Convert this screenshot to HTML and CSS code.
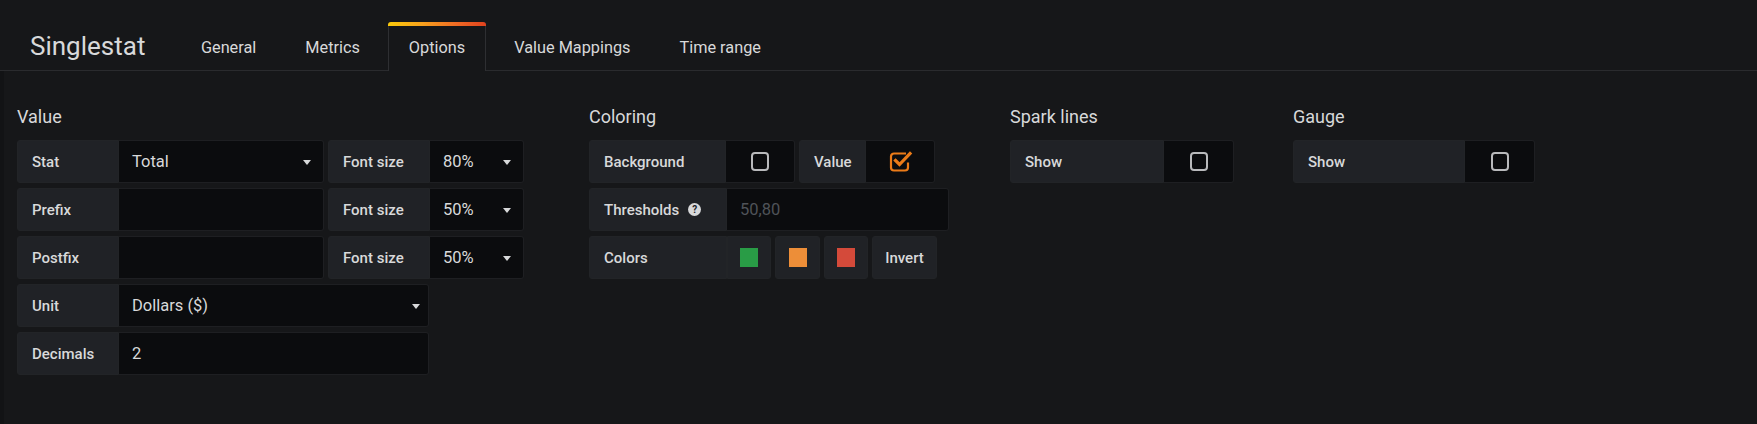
FILE: index.html
```html
<!DOCTYPE html>
<html lang="en">
<head>
<meta charset="utf-8">
<title>Singlestat options</title>
<link rel="stylesheet" href="styles.css">
</head>
<body>
<header class="header">
  <div class="title">Singlestat</div>
  <nav class="tabs">
    <div class="tab">General</div>
    <div class="tab">Metrics</div>
    <div class="tab active">Options</div>
    <div class="tab">Value Mappings</div>
    <div class="tab">Time range</div>
  </nav>
</header>
<main class="content">
  <section class="group group-value">
    <h2 class="group-title">Value</h2>
    <div class="row">
      <div class="label w-102">Stat</div>
      <div class="input select w-205"><span>Total</span><i class="caret"></i></div>
      <div class="label w-102 ml">Font size</div>
      <div class="input select w-94"><span>80%</span><i class="caret"></i></div>
    </div>
    <div class="row">
      <div class="label w-102">Prefix</div>
      <div class="input w-205"></div>
      <div class="label w-102 ml">Font size</div>
      <div class="input select w-94"><span>50%</span><i class="caret"></i></div>
    </div>
    <div class="row">
      <div class="label w-102">Postfix</div>
      <div class="input w-205"></div>
      <div class="label w-102 ml">Font size</div>
      <div class="input select w-94"><span>50%</span><i class="caret"></i></div>
    </div>
    <div class="row">
      <div class="label w-102">Unit</div>
      <div class="input select w-310"><span>Dollars ($)</span><i class="caret caret-unit"></i></div>
    </div>
    <div class="row">
      <div class="label w-102">Decimals</div>
      <div class="input w-310"><span>2</span></div>
    </div>
  </section>

  <section class="group group-coloring">
    <h2 class="group-title">Coloring</h2>
    <div class="row">
      <div class="label w-137">Background</div>
      <div class="input check-cell w-69"><span class="checkbox"></span></div>
      <div class="label w-67 ml">Value</div>
      <div class="input check-cell w-69">
        <svg class="checked" width="26" height="24" viewBox="0 0 26 24">
          <path d="M17 4.5 H5 a3 3 0 0 0 -3 3 v11 a3 3 0 0 0 3 3 h11 a3 3 0 0 0 3 -3 v-5" fill="none" stroke="#eb7b18" stroke-width="2.2"/>
          <path d="M6.5 11.5 L10.5 15.5 L21 4.5" fill="none" stroke="#eb7b18" stroke-width="3.2" stroke-linecap="square"/>
        </svg>
      </div>
    </div>
    <div class="row">
      <div class="label w-138">Thresholds <span class="help">?</span></div>
      <div class="input w-222"><span class="placeholder">50,80</span></div>
    </div>
    <div class="row">
      <div class="label w-138">Colors</div>
      <div class="label swatch-cell w-44 flat"><span class="swatch green"></span></div>
      <div class="label swatch-cell w-45 ml"><span class="swatch orange"></span></div>
      <div class="label swatch-cell w-44 ml"><span class="swatch red"></span></div>
      <div class="label w-65 ml center">Invert</div>
    </div>
  </section>

  <section class="group group-spark">
    <h2 class="group-title">Spark lines</h2>
    <div class="row">
      <div class="label w-154">Show</div>
      <div class="input check-cell w-70"><span class="checkbox"></span></div>
    </div>
  </section>

  <section class="group group-gauge">
    <h2 class="group-title">Gauge</h2>
    <div class="row">
      <div class="label w-172">Show</div>
      <div class="input check-cell w-70"><span class="checkbox"></span></div>
    </div>
  </section>
</main>
</body>
</html>
```

FILE: styles.css
```css
* { box-sizing: border-box; }

html, body {
  margin: 0;
  padding: 0;
  background: #161719;
  color: #d8d9da;
  font-family: Roboto, "Noto Sans", "Liberation Sans", sans-serif;
  height: 100%;
}

.header {
  display: flex;
  align-items: flex-end;
  height: 71px;
  border-bottom: 1px solid #2a2b2e;
  padding-left: 30px;
}

.title {
  font-size: 26px;
  line-height: 48px;
  margin-right: 31px;
  margin-bottom: 0;
}

.tabs {
  display: flex;
  align-items: flex-end;
  margin-bottom: -1px;
}

.tab {
  position: relative;
  font-size: 16.3px;
  line-height: 49px;
  height: 49px;
  padding: 0 20px;
  margin: 0 3.5px;
  border: 1px solid transparent;
  border-bottom: none;
  border-radius: 3px 3px 0 0;
}

.tab.active {
  border-color: #2e2f32;
  background: #161719;
}

.tab.active::before {
  content: "";
  position: absolute;
  left: -1px;
  right: -1px;
  top: -1px;
  height: 4px;
  border-radius: 3px 3px 0 0;
  background: linear-gradient(to right, #fbca0a 0%, #f7a11d 35%, #f06a24 70%, #e0421e 100%);
}

.content {
  display: flex;
  align-items: flex-start;
  padding: 35px 0 0 13px;
  border-left: 4px solid #121315;
  min-height: calc(100% - 71px);
}

.group-value { width: 572px; }
.group-coloring { width: 421px; }
.group-spark { width: 283px; }
.group-gauge { width: 300px; }

.group-title {
  margin: 0 0 12px 0;
  font-size: 18px;
  font-weight: 400;
  line-height: 22px;
}

.row {
  display: flex;
  height: 43px;
  margin-bottom: 5px;
}

.label {
  display: flex;
  align-items: center;
  padding-left: 14px;
  background: #202226;
  border: 1px solid #222427;
  border-radius: 3px 0 0 3px;
  font-size: 15px;
  font-weight: 500;
  white-space: nowrap;
}

.ml { margin-left: 4px; }

.label.flat { border-radius: 0; }

.swatch-cell {
  padding-left: 0;
  justify-content: center;
  border-radius: 3px;
}
.swatch-cell.flat { border-radius: 0 3px 3px 0; }

.label.center {
  justify-content: center;
  padding-left: 0;
  border-radius: 3px;
}

.input {
  display: flex;
  align-items: center;
  padding: 0 12px 0 13px;
  background: #0b0c0e;
  border: 1px solid #1e1f22;
  border-left: none;
  border-radius: 0 3px 3px 0;
  font-size: 16.5px;
}

.select span { flex: 1; }

.caret {
  width: 0;
  height: 0;
  border-left: 4.5px solid transparent;
  border-right: 4.5px solid transparent;
  border-top: 5px solid #d8d9da;
  margin-top: 2px;
}

.caret-unit { margin-right: -4px; }

.placeholder { color: #4f5358; }

.check-cell { justify-content: center; padding: 0; }

.checkbox {
  display: block;
  width: 18px;
  height: 19px;
  border: 2px solid #b9babc;
  border-radius: 4px;
}

.checked { display: block; margin-left: 4px; margin-top: -2px; }

.help {
  display: inline-flex;
  align-items: center;
  justify-content: center;
  width: 13px;
  height: 13px;
  margin-left: 9px;
  border-radius: 50%;
  background: #d8d9da;
  color: #202226;
  font-size: 10px;
  font-weight: 700;
  line-height: 1;
}

.swatch {
  display: block;
  width: 18px;
  height: 19px;
}
.swatch.green { background: #299c46; }
.swatch.orange { background: #ed8e38; }
.swatch.red { background: #d44a3a; }

.w-44 { width: 44px; }
.w-45 { width: 45px; }
.w-65 { width: 65px; }
.w-67 { width: 67px; }
.w-69 { width: 69px; }
.w-70 { width: 70px; }
.w-94 { width: 94px; }
.w-102 { width: 102px; }
.w-137 { width: 137px; }
.w-138 { width: 138px; }
.w-154 { width: 154px; }
.w-172 { width: 172px; }
.w-205 { width: 205px; }
.w-222 { width: 222px; }
.w-310 { width: 310px; }
```
